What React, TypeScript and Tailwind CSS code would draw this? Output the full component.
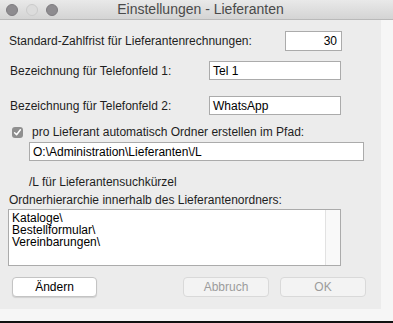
import React from "react";

const font = { fontFamily: '"Liberation Sans", Arial, Helvetica, sans-serif' };

export default function App() {
  return (
    <div className="relative w-[393px] h-[323px] bg-[#f6f6f6] overflow-hidden text-[12px] text-[#1e1e1e]" style={font}>
      {/* title bar */}
      <div className="relative h-[20px] w-[393px] border-b border-[#b9b9b9] bg-gradient-to-b from-[#e9e9e9] to-[#d4d4d4] flex items-center">
        <div className="flex items-center gap-[8px] pl-[6px]">
          <span className="block w-[12px] h-[12px] rounded-full bg-[#8e8c90] border border-[#7e7c80]" />
          <span className="block w-[12px] h-[12px] rounded-full bg-[#dcdcdc] border border-[#cbcbcb]" />
          <span className="block w-[12px] h-[12px] rounded-full bg-[#8e8c90] border border-[#7e7c80]" />
        </div>
        <div className="absolute inset-0 flex items-center justify-center pl-[8px] text-[14px] text-[#4a4a4a]">
          Einstellungen - Lieferanten
        </div>
      </div>

      {/* window body */}
      <div className="w-[381px] h-[289px] bg-[#ececec] flex flex-col">
        {/* row 1 */}
        <div className="mt-[11px] h-[20px] flex items-center pl-[9px]">
          <div className="w-[276px] whitespace-nowrap">Standard-Zahlfrist für Lieferantenrechnungen:</div>
          <div className="w-[57px] h-[20px] bg-white border border-[#ababab] flex items-center justify-end pr-[4px] text-black">30</div>
        </div>
        {/* row 2 */}
        <div className="mt-[10px] h-[19px] flex items-center pl-[10px]">
          <div className="w-[199px] whitespace-nowrap">Bezeichnung für Telefonfeld 1:</div>
          <div className="w-[132px] h-[19px] bg-white border border-[#ababab] flex items-center pl-[3px] text-black">Tel 1</div>
        </div>
        {/* row 3 */}
        <div className="mt-[16px] h-[19px] flex items-center pl-[10px]">
          <div className="w-[199px] whitespace-nowrap">Bezeichnung für Telefonfeld 2:</div>
          <div className="w-[132px] h-[19px] bg-white border border-[#ababab] flex items-center pl-[3px] text-black">WhatsApp</div>
        </div>
        {/* checkbox */}
        <div className="mt-[10px] h-[14px] flex items-center pl-[12px]">
          <div className="w-[11px] h-[11px] rounded-[3px] bg-[#8f8f8f] flex items-center justify-center">
            <svg width="9" height="9" viewBox="0 0 9 9">
              <path d="M1.6 4.8 L3.6 6.8 L7.4 1.8" fill="none" stroke="white" strokeWidth="1.5" strokeLinecap="round" strokeLinejoin="round" />
            </svg>
          </div>
          <div className="ml-[9px] whitespace-nowrap">pro Lieferant automatisch Ordner erstellen im Pfad:</div>
        </div>
        <div className="mt-[3px] h-[19px] pl-[29px] flex">
          <div className="w-[335px] h-[19px] bg-white border border-[#ababab] flex items-center pl-[3px] text-black">O:\Administration\Lieferanten\/L</div>
        </div>
        <div className="mt-[14px] h-[14px] flex items-center pl-[29px] whitespace-nowrap">/L für Lieferantensuchkürzel</div>
        <div className="mt-[4px] h-[14px] flex items-center pl-[9px] whitespace-nowrap">Ordnerhierarchie innerhalb des Lieferantenordners:</div>
        {/* textarea */}
        <div className="mt-[2px] ml-[8px] w-[333px] h-[57px] bg-white border border-[#ababab] flex">
          <div className="flex-1 pl-[3px] pt-[2px] leading-[12px] text-black">
            <div>Kataloge\</div>
            <div>Bestellformular\</div>
            <div>Vereinbarungen\</div>
          </div>
          <div className="w-[15px] h-full bg-[#f9f9f9] border-l border-[#e2e2e2]" />
        </div>
        {/* buttons */}
        <div className="mt-[11px] h-[20px] flex items-center">
          <div className="ml-[12px] w-[85px] h-[20px] rounded-[4px] bg-white border border-[#c4c4c4] shadow-[0_1px_1px_rgba(0,0,0,0.12)] flex items-center justify-center text-black">Ändern</div>
          <div className="ml-[86px] w-[86px] h-[20px] rounded-[4px] bg-[#f3f3f3] border border-[#d9d9d9] flex items-center justify-center text-[#9c9c9c]">Abbruch</div>
          <div className="ml-[11px] w-[86px] h-[20px] rounded-[4px] bg-[#f3f3f3] border border-[#d9d9d9] flex items-center justify-center text-[#9c9c9c]">OK</div>
        </div>
      </div>
      <div className="absolute left-0 bottom-0 w-[393px] h-[2px] bg-[#111]" />
    </div>
  );
}
